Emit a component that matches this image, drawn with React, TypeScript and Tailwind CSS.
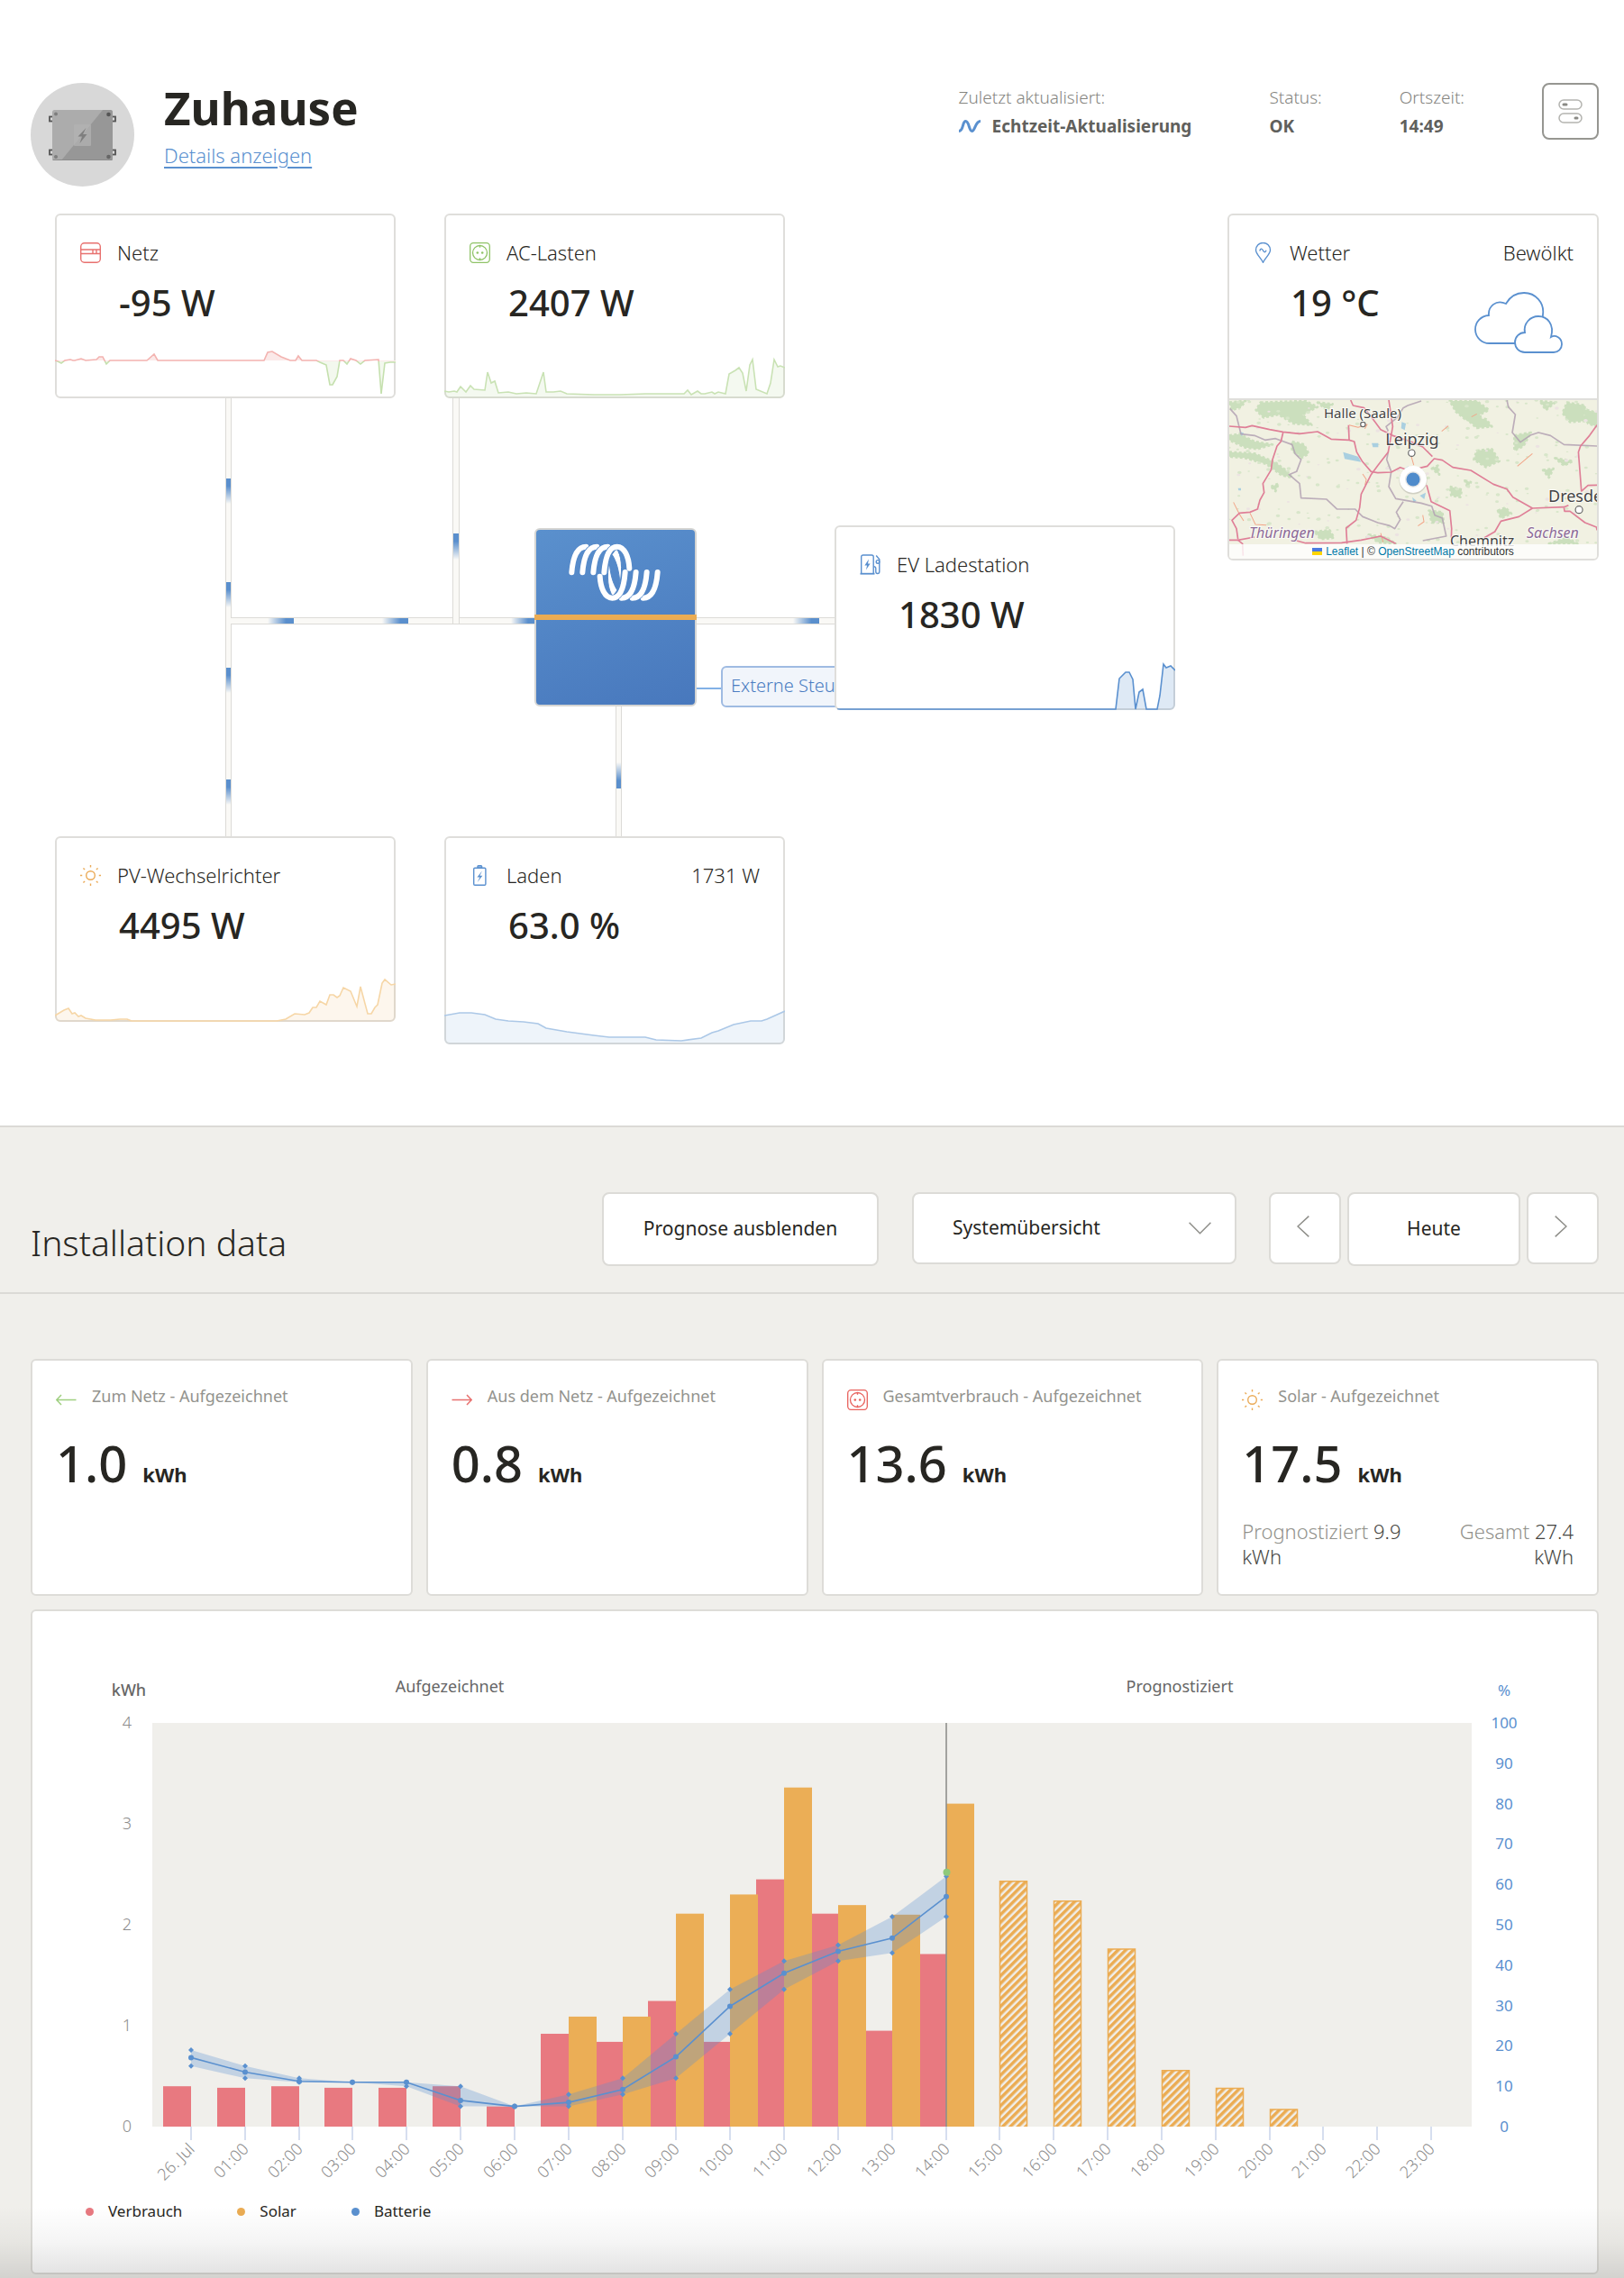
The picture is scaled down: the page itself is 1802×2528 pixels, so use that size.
import React from 'react';

type IconProps = { className?: string };

const MeterIcon = ({ className }: IconProps) => (
    <svg className={className} width="23" height="23" viewBox="0 0 23 23" fill="none" stroke="currentColor" strokeWidth="1.4" aria-hidden="true">
        <rect x="0.7" y="0.7" width="21.6" height="21.6" rx="4" />
        <path d="M1 8h21M1 12.5h21M14 8v4.5M18 8v4.5" />
    </svg>
);

const SocketIcon = ({ className }: IconProps) => (
    <svg className={className} width="23" height="23" viewBox="0 0 23 23" fill="none" stroke="currentColor" strokeWidth="1.3" aria-hidden="true">
        <rect x="0.7" y="0.7" width="21.6" height="21.6" rx="3.5" />
        <circle cx="11.5" cy="11.5" r="8" />
        <path d="M11.5 3.5v2.3M11.5 17.2v2.3" />
        <circle cx="8.8" cy="11.5" r="1.3" fill="currentColor" stroke="none" />
        <circle cx="14.2" cy="11.5" r="1.3" fill="currentColor" stroke="none" />
    </svg>
);

const SunIcon = ({ className }: IconProps) => (
    <svg className={className} width="23" height="23" viewBox="0 0 23 23" fill="none" stroke="currentColor" strokeWidth="1.4" aria-hidden="true">
        <circle cx="11.5" cy="11.5" r="4.8" />
        <path d="M11.5 0v2.6M11.5 20.4V23M0 11.5h2.2M20.8 11.5H23M3.4 3.4l1.7 1.7M17.9 17.9l1.7 1.7M19.6 3.4l-1.7 1.7M5.1 17.9l-1.7 1.7" />
    </svg>
);

const BatteryIcon = ({ className }: IconProps) => (
    <svg className={className} width="23" height="23" viewBox="0 0 23 23" fill="none" stroke="currentColor" strokeWidth="1.4" aria-hidden="true">
        <rect x="4.7" y="3.2" width="13.2" height="19" rx="1.2" />
        <path d="M9 3V1.6c0-.5.3-.9.8-.9h3c.5 0 .8.4.8.9V3z" fill="#a9c8ea" />
        <path d="M14 6.5l-5.6 7h3L8.6 19.2l5.8-7.4h-3z" fill="currentColor" stroke="none" />
    </svg>
);

const ChargerIcon = ({ className }: IconProps) => (
    <svg className={className} width="23" height="23" viewBox="0 0 23 23" fill="none" stroke="currentColor" strokeWidth="1.4" aria-hidden="true">
        <path d="M1.7 22V3a2 2 0 0 1 2-2h9.5a2 2 0 0 1 2 2v19" />
        <path d="M.5 21.7h16" strokeWidth="1.8" />
        <path d="M10 5.5L5.4 12.4h2.7l-1.2 5 4.7-7H9z" fill="currentColor" stroke="none" />
        <path d="M18.2 1.5l3.6 4.2v13.6c0 3-4 3-4 0v-3.5c0-1.6-.8-2.2-2.4-2.2" />
        <circle cx="20" cy="8.4" r="1.8" />
    </svg>
);

const PinIcon = ({ className }: IconProps) => (
    <svg className={className} width="23" height="23" viewBox="0 0 23 23" fill="none" stroke="currentColor" strokeWidth="1.4" aria-hidden="true">
        <path d="M11.5 22.2C9 17 3.5 13 3.5 8.5a8 8 0 0 1 16 0c0 4.5-5.5 8.5-8 13.7z" />
        <path d="M7.8 9.5c.8-3 2.2-3 3.4-1s2.4 3.6 3.8.2" />
    </svg>
);

const CloudsIcon = () => (
    <svg width="98" height="68" viewBox="0 0 98 68" fill="#fff" stroke="#5a90cf" strokeWidth="1.8" aria-hidden="true">
        <path d="M17 57a15.5 15.5 0 0 1-1-31c-1-10 8-18 19-13 4-7 11-12 20-12a21 21 0 0 1 21 24c0 18-8 32-20 32z" />
        <path d="M56 67a11 11 0 0 1 0-22c-2-10 6-18 15-18 10 0 18 9 14 23 5-3 12 1 12 8 0 5-4 9-9 9z" />
    </svg>
);

const WaveIcon = () => (
    <svg width="24" height="14" viewBox="0 0 24 14" fill="none" stroke="#5a90cf" strokeWidth="3" aria-hidden="true">
        <path d="M0 12.4c5.5 0 3.500-10.800 7.500-10.800s3.500 10.800 7 10.800S18 1.600 24 1.600" />
    </svg>
);

const SwitchesIcon = () => (
    <svg width="27" height="27" viewBox="0 0 27 27" fill="none" stroke="#b4b4b0" strokeWidth="1.5" aria-hidden="true">
        <rect x="1" y="1" width="25" height="10" rx="5" />
        <rect x="1" y="16" width="25" height="10" rx="5" />
        <rect x="4.5" y="4.5" width="6" height="3" rx="1.5" fill="#8a8a85" stroke="none" />
        <rect x="17.5" y="19.5" width="5" height="3" rx="1.5" fill="#8a8a85" stroke="none" />
    </svg>
);

const ArrowIcon = ({ className, flip }: IconProps & { flip?: boolean }) => (
    <svg className={className} width="23" height="23" viewBox="0 0 23 23" fill="none" stroke="currentColor" strokeWidth="1.5" aria-hidden="true">
        {flip ? <path d="M.5 11.5h22M6 6L.8 11.5 6 17" /> : <path d="M.5 11.5h22M17 6l5.2 5.5L17 17" />}
    </svg>
);

const Avatar = () => (
    <svg className="shrink-0" width="115" height="115" viewBox="0 0 115 115" aria-hidden="true">
        <circle cx="57.5" cy="57.5" r="57.5" fill="#d8d8d8" />
        <g fill="#d8d8d8" stroke="#555" strokeWidth="1.8">
            <rect x="21" y="37.5" width="4" height="5" />
            <rect x="21" y="74.5" width="4" height="5" />
            <rect x="90" y="37.5" width="4" height="5" />
            <rect x="90" y="74.5" width="4" height="5" />
        </g>
        <rect x="24" y="30" width="67" height="56" rx="2.5" fill="#acacac" />
        <path d="M80 30h8.5a2.5 2.5 0 0 1 2.5 2.5v51a2.5 2.5 0 0 1-2.5 2.5H34z" fill="#979797" />
        <rect x="48" y="46" width="19" height="24" rx="1" fill="#b4b4b4" opacity=".7" />
        <path d="M61.5 50L52.5 59.5h4.5L54.5 67l8-10H58z" fill="#7f7f7f" />
        <path d="M24.5 85.5h66" stroke="#8c8c8c" />
        <circle cx="28" cy="34.5" r="2" fill="#7d7d7d" />
        <circle cx="86.5" cy="35" r="2.3" fill="#555" />
        <circle cx="28" cy="82" r="2" fill="#7d7d7d" />
        <circle cx="86.5" cy="82" r="2.3" fill="#666" />
    </svg>
);

const LogoHalf = () => (
    <g>
        <path d="M195 56C212 78 216 120 207 172C203 130 196 100 180 76z" fill="#fff" stroke="#5287c7" strokeWidth="3" />
        {[0, 36, 72].map((x) => (
            <g key={x} transform={`translate(${x} 0)`} fill="none" strokeLinecap="round">
                <path d="M46 136C50 84 62 50 94 50" stroke="#5589c9" strokeWidth="22" />
                <path d="M46 136C50 84 62 50 94 50" stroke="#fff" strokeWidth="18" />
            </g>
        ))}
        <path d="M154 136C158 84 170 50 197 50C222 50 236 84 238 122" fill="none" stroke="#5589c9" strokeWidth="22" />
        <path d="M154 136C158 84 170 50 197 50C222 50 236 84 238 122" fill="none" stroke="#fff" strokeWidth="18" strokeLinecap="round" />
    </g>
);

const Logo = () => (
    <svg width="130" height="90" viewBox="0 0 390 270" role="img" aria-label="Victron">
        <g transform="rotate(180 189 135.5)"><LogoHalf /></g>
        <LogoHalf />
    </svg>
);

// ---- Energy flow ----

type SparkProps = { points: string; height: number; stroke: string; fill: string };

const Spark = ({ points, height, stroke, fill }: SparkProps) => (
    <svg className="absolute -inset-0.5 rounded-md" width="378" height={height} viewBox={`0 0 378 ${height}`} aria-hidden="true">
        <polygon points={`0,${height} ${points} 378,${height}`} fill={fill} />
        <polyline points={points} fill="none" stroke={stroke} strokeWidth="1.6" />
    </svg>
);

const GRID = '0,163 3,164 7,166 11,163 17,162 20,163 22,163 29,161 34,163 46,162 49,159 53,159 57,167 61,163 102,163 110,156 114,163 232,163 236,154 241,153 251,159 261,163 267,163 270,158 274,163 290,163 294,165 301,168 305,190 308,190 313,181 316,163 320,163 324,167 328,161 334,163 339,167 344,163 359,162 362,200 366,166 372,165 378,165';
const LOADS = '0,197 5,198 11,197 14,198 18,192 24,198 29,191 33,195 45,196 48,176 52,188 56,186 60,199 71,198 80,200 91,199 102,200 110,176 113,198 121,198 129,197 136,200 166,201 195,201 223,200 252,200 266,200 270,196 274,201 281,197 285,200 289,200 297,198 300,200 304,198 312,200 316,178 323,174 327,171 331,177 335,197 339,168 342,162 346,195 358,200 362,188 366,162 370,170 373,169 378,171';
const PV = '0,199 10,193 15,191 19,197 22,196 26,200 29,199 34,202 45,204 62,204 72,203 80,203 85,205 246,205 256,203 266,197 277,198 282,196 286,190 290,190 294,183 301,187 305,176 309,176 313,179 316,177 320,168 328,172 335,189 339,167 347,197 351,197 355,190 358,187 363,163 366,159 373,165 378,164';
const BATTERY = '0,199 17,196 30,196 45,198 57,203 71,205 88,206 104,208 113,213 136,217 166,221 183,223 223,223 235,226 263,227 285,224 297,218 304,216 321,209 340,205 352,205 358,203 378,194';
const EV = '3,204 312,204 316,170 318,168 323,163 327,163 331,171 334,204 338,185 342,182 346,204 358,204 361,189 365,154 368,158 373,156 378,161';

type NodeProps = { className: string; icon: React.ReactNode; label: string; value: string; extra?: string; children?: React.ReactNode };

const FlowNode = ({ className, icon, label, value, extra, children }: NodeProps) => (
    <div className={`absolute w-[378px] rounded-md border-2 border-[#dfdedb] bg-white px-[26px] pt-[25px] ${className}`}>
        {children}
        <div className="relative flex items-center gap-[18px] text-[22px] leading-8 font-light">
            {icon}
            <span>{label}</span>
            {extra && <span className="ml-auto">{extra}</span>}
        </div>
        <div className="relative mt-4 ml-[43px] text-[40px] leading-[48px] font-medium">{value}</div>
    </div>
);

const Pipes = () => (
    <svg className="absolute left-0 top-0" width="900" height="700" viewBox="0 0 900 700" aria-hidden="true">
        <defs>
            <linearGradient id="down" x1="0" y1="0" x2="0" y2="1">
                <stop offset=".3" stopColor="#5a8fcd" />
                <stop offset="1" stopColor="#5a8fcd" stopOpacity="0" />
            </linearGradient>
            <linearGradient id="up" x1="0" y1="1" x2="0" y2="0">
                <stop offset=".3" stopColor="#5a8fcd" />
                <stop offset="1" stopColor="#5a8fcd" stopOpacity="0" />
            </linearGradient>
            <linearGradient id="right" x1="1" y1="0" x2="0" y2="0">
                <stop offset=".3" stopColor="#5a8fcd" />
                <stop offset="1" stopColor="#5a8fcd" stopOpacity="0" />
            </linearGradient>
        </defs>
        <g fill="#faf9f6" stroke="#dcdbd7">
            <rect x="222.5" y="448.5" width="340" height="7" />
            <rect x="738.5" y="448.5" width="160" height="7" />
            <rect x="216.5" y="200.5" width="6" height="495" />
            <rect x="468.5" y="200.5" width="7" height="255" />
            <rect x="649.5" y="540.5" width="6" height="155" />
        </g>
        <path d="M222.5 449v6" stroke="#faf9f6" strokeWidth="2" />
        <g fill="url(#down)">
            <rect x="217" y="294" width="5" height="28" />
            <rect x="217" y="409" width="5" height="28" />
            <rect x="217" y="504" width="5" height="28" />
            <rect x="217" y="628" width="5" height="28" />
            <rect x="469" y="355" width="6" height="29" />
        </g>
        <rect x="650" y="609" width="5" height="29" fill="url(#up)" />
        <g fill="url(#right)">
            <rect x="263" y="449" width="29" height="6" />
            <rect x="390" y="449" width="29" height="6" />
            <rect x="533" y="449" width="27" height="6" />
            <rect x="846" y="449" width="29" height="6" />
        </g>
        <path d="M739 527h28" stroke="#82b1e6" strokeWidth="2" />
    </svg>
);

const FlowDiagram = () => (
    <div className="relative h-[925px] min-w-0 flex-1">
        <Pipes />
        <FlowNode className="left-[27px] top-0 h-[205px]" icon={<MeterIcon className="text-[#e8716f]" />} label="Netz" value="-95 W">
            <svg className="absolute -inset-0.5 rounded-md" width="378" height="205" viewBox="0 0 378 205" aria-hidden="true">
                <clipPath id="import"><rect width="378" height="164" /></clipPath>
                <clipPath id="export"><rect y="164" width="378" height="41" /></clipPath>
                <g clipPath="url(#import)">
                    <polygon points={`0,163 ${GRID} 378,163`} fill="#fbe9e8" />
                    <polyline points={GRID} fill="none" stroke="#f3b3b0" strokeWidth="1.6" />
                </g>
                <g clipPath="url(#export)">
                    <polygon points={`0,163 ${GRID} 378,163`} fill="#f3f8ee" />
                    <polyline points={GRID} fill="none" stroke="#c5e0ae" strokeWidth="1.6" />
                </g>
            </svg>
        </FlowNode>
        <FlowNode className="left-[459px] top-0 h-[205px]" icon={<SocketIcon className="text-[#8fc367]" />} label="AC-Lasten" value="2407 W">
            <Spark points={LOADS} height={205} stroke="#c9e2b4" fill="#8fc3671a" />
        </FlowNode>

        <div className="absolute left-[559px] top-[349px] h-[198px] w-[180px] rounded-md border-2 border-[#d5d5d3] bg-linear-160 from-[#5a90cd] to-[#4878bd]">
            <div className="pl-6 pt-0.5"><Logo /></div>
            <div className="absolute -inset-x-0.5 top-[94px] h-1.5 bg-[#ebac53]"></div>
        </div>
        <div className="absolute left-[766px] top-[502px] h-[46px] w-[260px] overflow-hidden rounded-md border-2 border-[#9fbbe2] bg-[#f1f5fb] pl-[9px] text-[20px] leading-10 font-light whitespace-nowrap text-[#4b7dc2]">
            Externe Steuerung
        </div>
        <FlowNode className="left-[892px] top-[346px] h-[205px]" icon={<ChargerIcon className="text-[#5a90cf]" />} label="EV Ladestation" value="1830 W">
            <Spark points={EV} height={205} stroke="#5a90cf" fill="#5a90cf33" />
        </FlowNode>

        <FlowNode className="left-[27px] top-[691px] h-[206px]" icon={<SunIcon className="text-[#ebab58]" />} label="PV-Wechselrichter" value="4495 W">
            <Spark points={PV} height={206} stroke="#f6d6a6" fill="#f0a74a1a" />
        </FlowNode>
        <FlowNode className="left-[459px] top-[691px] h-[231px]" icon={<BatteryIcon className="text-[#5a90cf]" />} label="Laden" value="63.0 %" extra="1731 W">
            <Spark points={BATTERY} height={231} stroke="#acc8e7" fill="#5a90cf1a" />
        </FlowNode>
    </div>
);

// ---- Weather ----

const FORESTS = [
    '110,20 260,15 300,35 250,60 280,95 220,90 170,60 120,70 95,45',
    '6,20 60,15 45,35 15,45', '6,130 40,125 90,150 150,160 100,175 60,170 6,145',
    '6,185 90,190 160,220 200,250 215,270 180,262 130,225 60,205 6,200',
    '215,150 255,160 270,190 245,205 215,180', '740,15 830,15 870,45 840,60 850,95 790,75 760,50',
    '790,70 860,75 880,100 830,105', '830,180 880,175 905,215 860,235 820,210',
    '1130,20 1190,30 1185,65 1210,80 1140,85 1115,55', '1040,15 1090,20 1060,45',
    '1180,40 1230,55 1230,100 1200,90', '670,380 715,385 720,420 680,420',
    '740,300 780,310 775,335 745,330', '790,280 810,285 800,305', '955,130 1010,120 985,165 955,180',
    '1050,245 1085,240 1070,270', '1090,205 1150,215 1120,230', '290,450 340,445 355,470 310,475',
    '900,380 925,370 945,390 910,405', '470,460 530,470 560,490 500,485', '300,20 350,25 330,45',
    '1070,490 1130,470 1165,490', '680,240 700,230 705,260', '145,300 170,290 160,315',
];

// small scattered woods and settlements, laid out by a fixed recurrence so they never move
const SPECKS = Array.from({ length: 260 }, (_, i) => ({
    x: 6 + ((i * 397 + 61) % 1224),
    y: 12 + ((i * 211 + ((i * i) % 97)) % 478),
    r: 2 + ((i * 7) % 4),
    tone: i % 5,
}));

const ROADS = [
    'M6 99L60 103 82 97 140 110 185 118 240 124 300 117 345 142 405 145 422 150 430 185 448 215 478 250 500 254 545 252 575 236 600 245',
    'M185 120L178 150 165 165 150 210 145 245 118 290 122 320 108 345 100 375 75 385 40 388 15 412 30 440 35 475',
    'M405 145L403 95M410 12L418 30 455 38 480 70 510 110 550 130 610 150 650 168 682 200',
    'M537 12L550 100 535 185 500 230 478 260 445 325 440 370 428 412 395 438 398 490',
    'M640 238L665 232 688 207 715 212 750 236 810 246 885 292 930 308 950 335 1015 372 1120 368 1135 362',
    'M663 295L678 350 740 380 746 440 745 470', 'M1015 372L970 400 910 415 890 450 855 470',
    'M1230 95L1205 130 1175 165 1168 185 1178 315 1200 296 1230 295', 'M1120 370L1122 382 1140 382 1190 420 1228 435 1230 445',
    'M6 478L35 478 90 468M230 480L260 488 380 487 445 478 510 465 560 490', 'M35 478L50 490 52 530',
];

const BORDERS = [
    'M8 40L30 65 45 125 90 130 125 145 160 140 215 160 225 190 245 210 230 250 205 260 240 290 245 338 330 342 365 375 425 375 450 400 500 420 540 430 557 440 575 410 562 385 585 350',
    'M645 15L600 30 585 38 565 70 528 100 535 115M535 185L530 210 545 250 537 300 560 340 645 355 680 365 690 395 715 405 728 465 650 480',
    'M930 12L935 35 958 60 948 120 975 152 1010 128 1035 120 1075 130 1120 160 1230 165',
];

const LocationMap = () => (
    <svg className="block h-full w-full" viewBox="0 0 408 176" preserveAspectRatio="xMidYMid slice" fontFamily="'Noto Sans', sans-serif" role="img" aria-label="Karte">
        <rect width="408" height="176" fill="#f1f1e2" />
        <g transform="translate(-2 -4) scale(.3334)" fill="none" strokeLinejoin="round">
            <g fill="#cbdfbd" stroke="#cbdfbd" strokeWidth="8" strokeDasharray="9 7">{FORESTS.map((p) => <polygon key={p} points={p} />)}</g>
            {SPECKS.map((s, i) => (
                <ellipse key={i} cx={s.x} cy={s.y} rx={s.r + 2} ry={s.r} fill={s.tone === 4 ? '#ece3e2' : '#d8e6ca'} />
            ))}
            <g fill="#a9cfe0">
                <path d="M385 185l50 15 10 18-55-10zM480 155h22v14h-18zM580 85l14 5-4 22-12-6zM40 118l14 3-6 12zM35 305h10v8h-8z" />
                <path d="M640 330l20-10-5 22zM615 335l14 12-10 6zM590 240l12-8 2 20z" />
            </g>
            <g stroke="#f2a588" strokeWidth="3">
                <path d="M405 95l30 8 30-10-8 14M450 258l12 18-4 18M965 232l50-42M735 98l-22 18M830 58l-18 10M612 200l8 28M20 352l20 40 14 22M75 388l18 38 36 2M650 395l4 22-20 14M510 455l8 30" />
            </g>
            <g stroke="#b3a2b3" strokeWidth="5" opacity=".85">{BORDERS.map((d) => <path key={d} d={d} />)}</g>
            <g stroke="#df7f97" strokeWidth="5">{ROADS.map((d) => <path key={d} d={d} />)}</g>
            <g fill="#fff" stroke="#666" strokeWidth="3.5">
                <circle cx="451" cy="93" r="8" />
                <circle cx="613" cy="188" r="11" />
                <circle cx="1170" cy="377" r="12" />
            </g>
        </g>
        <g fill="#444" stroke="#fff" strokeOpacity=".7" strokeWidth="2" paintOrder="stroke">
            <text x="148" y="20" fontSize="15" textAnchor="middle">Halle (Saale)</text>
            <text x="203" y="50" fontSize="18" textAnchor="middle">Leipzig</text>
            <text x="354" y="113" fontSize="18">Dresden</text>
            <text x="245" y="162" fontSize="16">Chemnitz</text>
            <g fill="#8d6a98" fontStyle="italic" fontSize="16">
                <text x="22" y="153">Thüringen</text>
                <text x="330" y="153">Sachsen</text>
            </g>
        </g>
        <circle cx="204" cy="89" r="15.5" fill="#0002" />
        <circle cx="204" cy="88" r="15" fill="#fff" />
        <circle cx="204" cy="88" r="9" fill="#0000001a" />
        <circle cx="204" cy="88" r="7.5" fill="#4f8bcb" />
    </svg>
);

const WeatherCard = () => (
    <aside className="w-[412px] shrink-0 self-start overflow-hidden rounded-md border-2 border-[#dfdedb] bg-white">
        <div className="h-[203px] px-[26px] pt-[25px]">
            <div className="flex items-center gap-[18px] text-[22px] leading-8 font-light">
                <PinIcon className="text-[#5a90cf]" />
                <span>Wetter</span>
                <span className="ml-auto">Bewölkt</span>
            </div>
            <div className="mt-4 flex justify-between pl-[42px] pr-3">
                <div className="text-[40px] leading-[48px] font-medium">19 °C</div>
                <div className="pt-3"><CloudsIcon /></div>
            </div>
        </div>
        <div className="relative h-[178px] border-t-2 border-[#dfdedb]">
            <LocationMap />
            <div className="absolute inset-x-0 bottom-0 flex h-4 items-center justify-center gap-1 bg-white/80 font-['Liberation_Sans',sans-serif] text-[12px] leading-4 text-[#333]">
                <svg width="11" height="8" viewBox="0 0 11 8" aria-hidden="true"><path fill="#4c7be1" d="M0 0h11v4H0z" /><path fill="#ffd500" d="M0 4h11v4H0z" /></svg>
                <span><a href="#leaflet" className="text-[#0078a8]">Leaflet</a> | © <a href="#osm" className="text-[#0078a8]">OpenStreetMap</a> contributors</span>
            </div>
        </div>
    </aside>
);

// ---- Header ----

const Header = () => (
    <header className="flex items-start justify-between pl-[34px] pr-7 pt-[92px]">
        <div className="flex gap-[33px]">
            <Avatar />
            <div>
                <h1 className="text-[51px] leading-[54px] font-bold">Zuhause</h1>
                <a href="#details" className="mt-2.5 inline-block text-[22px] leading-8 font-light text-[#5a90cf] underline decoration-2 underline-offset-4">Details anzeigen</a>
            </div>
        </div>
        <div className="flex items-start gap-[86px] text-[19px] leading-8">
            <div>
                <div className="font-light text-[#85857f]">Zuletzt aktualisiert:</div>
                <div className="flex items-center gap-[13px] font-bold text-[#60605c]"><WaveIcon />Echtzeit-Aktualisierung</div>
            </div>
            <div>
                <div className="font-light text-[#85857f]">Status:</div>
                <div className="font-bold text-[#60605c]">OK</div>
            </div>
            <div>
                <div className="font-light text-[#85857f]">Ortszeit:</div>
                <div className="font-bold text-[#60605c]">14:49</div>
            </div>
            <button aria-label="Steuerung" className="flex h-[63px] w-[63px] items-center justify-center rounded-lg border-2 border-[#969691]">
                <SwitchesIcon />
            </button>
        </div>
    </header>
);

// ---- Installation data ----

const Toolbar = () => (
    <div className="flex items-end justify-between border-b-2 border-[#dbdad6] pb-[31px] pl-[34px] pr-7 pt-[72px]">
        <h2 className="text-[39px] leading-[48px] font-light">Installation data</h2>
        <div className="-mb-0.5 flex items-start text-[21px]">
            <button className="h-[82px] w-[307px] rounded-lg border-2 border-[#dcdbd7] bg-white">Prognose ausblenden</button>
            <div className="relative ml-[37px]">
                <select aria-label="Ansicht" className="h-20 w-[360px] appearance-none rounded-lg border-2 border-[#dcdbd7] bg-white pl-[43px]">
                    <option>Systemübersicht</option>
                </select>
                <svg className="pointer-events-none absolute right-7 top-[33px]" width="25" height="14" viewBox="0 0 25 14" fill="none" stroke="#8e8e89" strokeWidth="1.5" aria-hidden="true"><path d="M.6.8l11.9 12L24.4.8" /></svg>
            </div>
            <button aria-label="Zurück" className="ml-9 flex h-20 w-20 items-center justify-center rounded-lg border-2 border-[#dcdbd7] bg-white">
                <svg className="mb-1 mr-1" width="14" height="24" viewBox="0 0 14 24" fill="none" stroke="#8e8e89" strokeWidth="1.5" aria-hidden="true"><path d="M13.3.6L1 12l12.3 11.4" /></svg>
            </button>
            <button className="ml-[7px] h-[82px] w-[192px] rounded-lg border-2 border-[#dcdbd7] bg-white">Heute</button>
            <button aria-label="Weiter" className="ml-[7px] flex h-20 w-20 items-center justify-center rounded-lg border-2 border-[#dcdbd7] bg-white">
                <svg className="mb-1 mr-1" width="14" height="24" viewBox="0 0 14 24" fill="none" stroke="#8e8e89" strokeWidth="1.5" aria-hidden="true"><path d="M.7.6L13 12 .7 23.4" /></svg>
            </button>
        </div>
    </div>
);

const STATS = [
    { label: 'Zum Netz', value: '1.0', icon: <ArrowIcon flip className="text-[#9fcf80]" /> },
    { label: 'Aus dem Netz', value: '0.8', icon: <ArrowIcon className="text-[#e8716f]" /> },
    { label: 'Gesamtverbrauch', value: '13.6', icon: <SocketIcon className="text-[#e8615c]" /> },
    { label: 'Solar', value: '17.5', icon: <SunIcon className="text-[#ebab58]" />, forecast: '9.9', total: '27.4' },
];

const StatCards = () => (
    <div className="grid grid-cols-4 gap-[15px]">
        {STATS.map((stat) => (
            <div key={stat.label} className="h-[263px] rounded-md border-2 border-[#dddcd8] bg-white px-[26px] pt-[27px]">
                <div className="flex h-6 items-start gap-[17px] text-[18px] leading-6 text-[#93938e]">
                    <div className="shrink-0 pt-[5px]">{stat.icon}</div>
                    <span>{stat.label} - Aufgezeichnet</span>
                </div>
                <div className="mt-[26px] flex items-baseline gap-[17px]">
                    <span className="text-[56px] leading-[72px] font-medium">{stat.value}</span>
                    <span className="text-[22px] font-bold">kWh</span>
                </div>
                {stat.forecast && (
                    <div className="mt-[26px] grid grid-cols-[200px_1fr] gap-8 text-[22px] leading-7 font-light text-[#454541]">
                        <div><span className="text-[#91918b]">Prognostiziert</span> {stat.forecast} kWh</div>
                        <div className="text-right"><span className="text-[#91918b]">Gesamt</span> {stat.total} kWh</div>
                    </div>
                )}
            </div>
        ))}
    </div>
);

const USAGE = [0.4, 0.385, 0.4, 0.385, 0.385, 0.4, 0.2, 0.92, 0.84, 1.245, 0.84, 2.45, 2.11, 0.95, 1.71];
const SOLAR = [0, 0, 0, 0, 0, 0, 0, 1.09, 1.09, 2.11, 2.3, 3.36, 2.195, 2.1, 3.2];
const FORECAST = [2.43, 2.235, 1.76, 0.556, 0.38, 0.17];
// [mean, min, max] state of charge in percent
const CHARGE = [
    [17.1, 15, 19], [13.5, 12, 15], [11.2, 11, 12], [11, 11, 11], [11, 10, 11], [6.5, 5, 10], [5, 5, 5], [6, 5, 8],
    [9.2, 8, 12], [17.3, 12, 23], [29.8, 23, 34], [38, 34, 41], [43.4, 41, 45], [46.7, 43, 52], [57, 52, 62],
];

const BASE = 572;
const kwh = (v: number) => BASE - v * 112;
const pct = (v: number) => BASE - v * 4.48;
const tick = (i: number) => 176 + Math.round(i * 59.83);

const band = [
    ...CHARGE.map((c, i) => `${tick(i)},${pct(c[2])}`),
    ...CHARGE.map((c, i) => `${tick(i)},${pct(c[1])}`).reverse(),
].join(' ');

const Chart = () => (
    <svg className="block h-auto w-full" viewBox="0 0 1736 642" fontSize="18" role="img" aria-label="Verbrauch, Solar und Batterie je Stunde">
        <defs>
            <pattern id="hatch" width="6" height="6" patternUnits="userSpaceOnUse" patternTransform="rotate(45)">
                <rect width="3.5" height="6" fill="#ebac53" />
            </pattern>
        </defs>
        <g fill="#666" textAnchor="middle">
            <text x="107" y="94" fontWeight="500">kWh</text>
            <text x="463" y="90">Aufgezeichnet</text>
            <text x="1273" y="90">Prognostiziert</text>
        </g>
        <rect x="133" y="124" width="1464" height="448" fill="#f0efeb" />
        <g fill="#8c8c8c" fontWeight="300">
            {[0, 1, 2, 3, 4].map((v) => <text key={v} x="110" y={kwh(v) + 6} textAnchor="end">{v}</text>)}
        </g>
        <g fill="#5a90cf" textAnchor="middle" fontSize="17">
            <text x="1633" y="94">%</text>
            {[0, 10, 20, 30, 40, 50, 60, 70, 80, 90, 100].map((v) => <text key={v} x="1633" y={pct(v) + 6}>{v}</text>)}
        </g>
        {Array.from({ length: 24 }, (_, i) => (
            <g key={i}>
                <path d={`M${tick(i)} 572v15`} stroke="#ccd6eb" strokeWidth="1.6" />
                <text x={tick(i) + 5} y="598" textAnchor="end" fill="#8c8c8c" fontWeight="300" transform={`rotate(-45 ${tick(i) + 5} 598)`}>
                    {i === 0 ? '26. Jul' : `${String(i).padStart(2, '0')}:00`}
                </text>
            </g>
        ))}
        {USAGE.map((v, i) => <rect key={i} x={tick(i) - 31} y={kwh(v)} width="31" height={BASE - kwh(v)} fill="#e87980" />)}
        {SOLAR.map((v, i) => <rect key={i} x={tick(i)} y={kwh(v)} width="31" height={BASE - kwh(v)} fill="#ebae56" />)}
        {FORECAST.map((v, i) => (
            <path key={i} d={`M${tick(i + 15) + 0.5} ${BASE}V${kwh(v)}h30V${BASE}`} fill="url(#hatch)" stroke="#ebac53" strokeWidth="1.5" />
        ))}
        <path d="M1014 124v448" stroke="#8f8f8c" strokeWidth="1.6" />
        <polygon points={band} fill="#5a90cf" fillOpacity=".3" />
        <polyline points={CHARGE.map((c, i) => `${tick(i)},${pct(c[0])}`).join(' ')} fill="none" stroke="#5a90cf" strokeWidth="1.6" />
        {CHARGE.map((c, i) => (
            <g key={i} fill="#5a90cf">
                <circle cx={tick(i)} cy={pct(c[0])} r="3" />
                {[c[1], c[2]].map((v, j) => <path key={j} d={`M${tick(i) - 3} ${pct(v)}l3-3 3 3-3 3z`} />)}
            </g>
        ))}
        <circle cx="1014.5" cy={pct(63)} r="4" fill="#8fc97a" />
    </svg>
);

const LEGEND = [
    { label: 'Verbrauch', dot: 'bg-[#e87980]' },
    { label: 'Solar', dot: 'bg-[#ebac53]' },
    { label: 'Batterie', dot: 'bg-[#5a90cf]' },
];

export default function App() {
    return (
        <div className="bg-white font-['Noto_Sans',sans-serif] text-[#272622]">
            <Header />
            <main>
                <section className="mt-[30px] flex pb-[87px] pl-[34px] pr-7">
                    <FlowDiagram />
                    <WeatherCard />
                </section>
                <section className="relative border-t-2 border-[#dbdad6] bg-[#f0efeb]">
                    <Toolbar />
                    <div className="pb-1 pl-[34px] pr-7 pt-[72px]">
                        <StatCards />
                        <div className="mt-[15px] rounded-md border-2 border-[#dddcd8] bg-white">
                            <Chart />
                            <ul className="mt-3 flex gap-[61px] pb-14 pl-[59px] text-[17px] leading-6">
                                {LEGEND.map((item) => (
                                    <li key={item.label} className="flex items-center gap-4">
                                        <span className={`h-[9px] w-[9px] rounded-full ${item.dot}`}></span>
                                        {item.label}
                                    </li>
                                ))}
                            </ul>
                        </div>
                    </div>
                    <div className="pointer-events-none absolute inset-x-0 bottom-0 h-20 bg-linear-to-t from-black/12 via-black/4 to-transparent"></div>
                </section>
            </main>
        </div>
    );
}
